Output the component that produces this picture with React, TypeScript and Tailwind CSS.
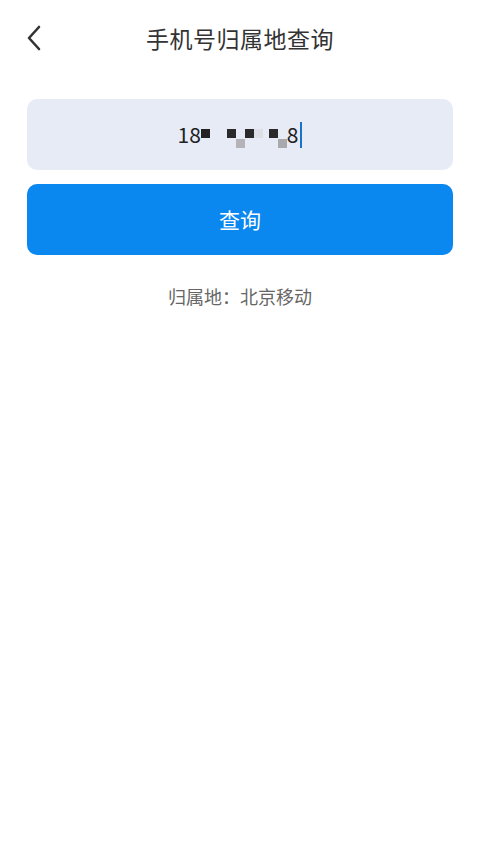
import * as React from "react"

const FONT = {
  fontFamily: '"Noto Sans CJK SC", "Noto Sans", Roboto, sans-serif',
}

// pixelated mask blocks over the hidden digits
function Block({ tone, low }: { tone: string; low?: boolean }) {
  return (
    <span
      className={`inline-block h-[9px] w-[9px] ${tone} ${low ? "translate-y-[9px]" : "-translate-y-[1px]"}`}
    />
  )
}

export default function App() {
  return (
    <div className="min-h-[853px] w-full bg-white" style={FONT}>
      <header className="relative flex h-[76px] items-center justify-center">
        <button
          type="button"
          className="absolute left-[20px] top-[22px] flex h-[32px] w-[28px] items-center justify-center"
          aria-label="返回"
        >
          <svg width="18" height="28" viewBox="0 0 18 28" fill="none">
            <path
              d="M14 3 L4 14 L14 25"
              stroke="#333"
              strokeWidth="2.6"
              strokeLinecap="round"
              strokeLinejoin="round"
            />
          </svg>
        </button>
        <h1 className="text-[23px] leading-none tracking-[0.5px] text-[#333]">
          手机号归属地查询
        </h1>
      </header>

      <div className="flex flex-col px-[27px] pt-[23px]">
        <div className="flex h-[71px] items-center justify-center rounded-[10px] bg-[#e6ebf6]">
          <div className="flex items-center text-[21px] leading-none text-[#222]">
            <span>18</span>
            <Block tone="bg-[#222]" />
            <span className="w-[17px]" />
            <Block tone="bg-[#2a2a2a]" />
            <Block tone="bg-[#b4b4b8]" low />
            <Block tone="bg-[#2a2a2a]" />
            <Block tone="bg-[#dcdfe6]" />
            <span className="w-[6px]" />
            <Block tone="bg-[#2a2a2a]" />
            <Block tone="bg-[#a9a9ad]" low />
            <span>8</span>
            <span className="ml-[2px] inline-block h-[26px] w-[2px] bg-[#1a73c8]" />
          </div>
        </div>

        <button
          type="button"
          className="mt-[14px] flex h-[71px] items-center justify-center rounded-[10px] bg-[#0b87f0] text-[21px] text-white"
        >
          查询
        </button>

        <p className="mt-[28px] text-center text-[18px] text-[#666]">
          归属地：北京移动
        </p>
      </div>
    </div>
  )
}
